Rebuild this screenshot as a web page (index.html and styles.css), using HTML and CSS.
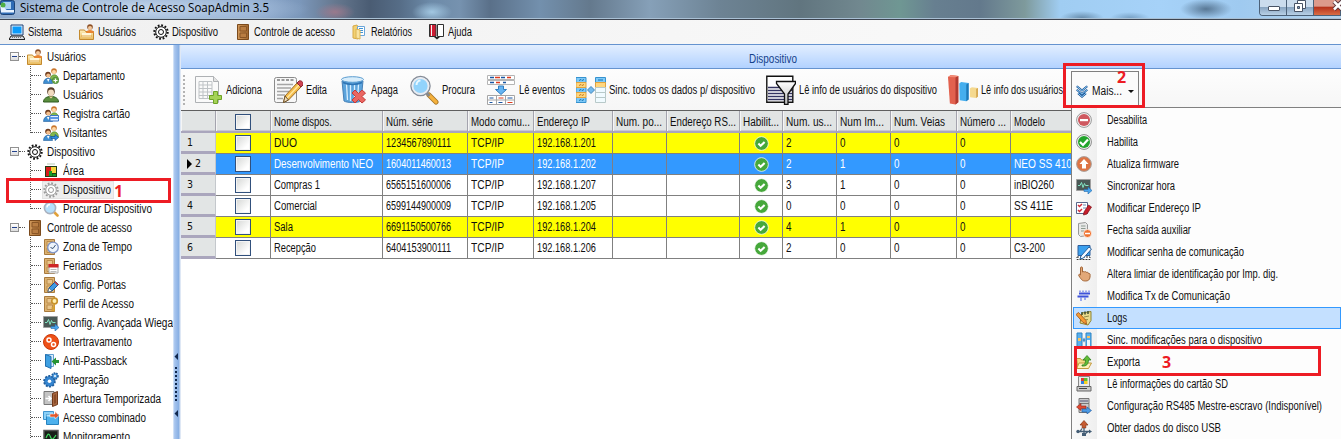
FILE: index.html
```html
<!DOCTYPE html>
<html lang="pt-BR">
<head>
<meta charset="utf-8">
<title>Sistema de Controle de Acesso SoapAdmin 3.5</title>
<link rel="stylesheet" href="styles.css">
</head>
<body>
<svg class="defs" aria-hidden="true">
  <linearGradient id="gBlue" x2="0" y2="1"><stop stop-color="#c9ecff"/><stop offset="1" stop-color="#1683dc"/></linearGradient>
  <linearGradient id="gDoor" x2="1" y2="0"><stop stop-color="#d29a5c"/><stop offset="1" stop-color="#a0662e"/></linearGradient>
  <linearGradient id="gFold" x2="0" y2="1"><stop stop-color="#fff0bd"/><stop offset="1" stop-color="#e8b95c"/></linearGradient>
  <linearGradient id="gGray" x2="0" y2="1"><stop stop-color="#fff"/><stop offset="1" stop-color="#bcbcbc"/></linearGradient>
  <symbol id="pc" viewBox="0 0 16 16"><path d="M2 1h12v10H2z" fill="#e8f4ff" stroke="#1b3f74"/><path d="M3.500 2.500h9v7h-9z" fill="#0c9bfa"/><path d="M2 12h12l2 3.500H0z" fill="#d9dde4" stroke="#222"/><path d="M3 13.500h9" stroke="#777" stroke-dasharray="1 1"/></symbol>
  <symbol id="userfolder" viewBox="0 0 16 16"><path d="M.5 6h5l1 1.500h8v8H.5z" fill="url(#gFold)" stroke="#c48a2e"/><path d="M3 9h9v4H3z" fill="#fff6d8"/><circle cx="11" cy="3" r="2.800" fill="#8c4f25"/><circle cx="11" cy="4" r="2" fill="#f5c99c"/><path d="M7 9c0-4 8-4 8 0z" fill="#e98532"/><path d="M2 12h11" stroke="#e0a848"/></symbol>
  <symbol id="gear" viewBox="0 0 16 16"><circle cx="8" cy="8" r="6.700" fill="none" stroke="currentColor" stroke-width="2" stroke-dasharray="1.800 1.708"/><circle cx="8" cy="8" r="5.300" fill="#fff" stroke="currentColor"/><circle cx="8" cy="8" r="2.500" fill="#fff" stroke="currentColor"/></symbol>
  <symbol id="door" viewBox="0 0 16 16"><path d="M2.500.5h11v15h-11z" fill="url(#gDoor)" stroke="#7b4a1c"/><path d="M5 2.500h6.500v4.500H5zM5 9h6.500v4.500H5z" fill="#b97d42" stroke="#8a5626"/></symbol>
  <symbol id="tandoor" viewBox="0 0 16 16"><path d="M1.500.5h10v15h-10z" fill="#dcb272" stroke="#a87a3d"/><path d="M4 2.500h5.500v4.500H4zM4 9h5.500v4.500H4z" fill="#e9c68d" stroke="#bb8c4b"/></symbol>
  <symbol id="report" viewBox="0 0 16 16"><path d="M1 2l4-1 1 2v12l-5-1z" fill="#f2d072" stroke="#d6a947"/><path d="M5.500 2.500h7v9h-7z" fill="#fff" stroke="#6aa5d8"/><path d="M7 4.500h4M7 6.500h4M7 8.500h4" stroke="#3e93d6"/><path d="M4 5l4 1v9l-4-1z" fill="#f9e3a0" stroke="#dcb453"/></symbol>
  <symbol id="book" viewBox="0 0 16 16"><path d="M.5.500h6.500v12H.5z" fill="#cd1c33" stroke="#303030"/><path d="M8.500.5h6v12h-6z" fill="#fff" stroke="#303030"/><path d="M2.500 1v11" stroke="#f2f2f2"/><path d="M5 13h6l-3 2.500z" fill="#222"/></symbol>
  <symbol id="people" viewBox="0 0 16 16"><circle cx="11" cy="3" r="2.800" fill="#c9752b"/><circle cx="11" cy="4" r="2" fill="#ffd7a5"/><path d="M7 12c0-7 8.500-7 8.500 0z" fill="#82b64c" stroke="#4d812a" stroke-width=".6"/><circle cx="5" cy="6.500" r="2.800" fill="#6e3b1b"/><circle cx="5.200" cy="7.500" r="2" fill="#f4be8a"/><path d="M.5 15.500c0-7 9-7 9 0z" fill="#3e8ed2" stroke="#22609c" stroke-width=".6"/><path d="M4 11l1.200 3L6.500 11z" fill="#fff"/></symbol>
  <symbol id="dept" viewBox="0 0 16 16"><use href="#people"/><circle cx="12.500" cy="12.500" r="3.200" fill="#6cab4a" stroke="#3b7730" stroke-width=".6"/><path d="M12.500 10.500v4M10.500 12.500h4" stroke="#fff" stroke-width="1.200"/></symbol>
  <symbol id="card" viewBox="0 0 16 16"><use href="#people"/><path d="M7 9.500h8.500V15H7z" fill="#e3efff" stroke="#3a75c5"/><path d="M7 11h8.500v2H7z" fill="#5c97e5"/></symbol>
  <symbol id="visit" viewBox="0 0 16 16"><use href="#people"/><path d="M8 11.500h4V9.500l3.600 3-3.600 3v-2H8z" fill="#2f8de2" stroke="#135493" stroke-width=".7"/></symbol>
  <symbol id="user" viewBox="0 0 16 16"><ellipse cx="8" cy="4.500" rx="3.800" ry="4.200" fill="#5a3f2a"/><ellipse cx="8" cy="5.700" rx="3" ry="3.300" fill="#f3dcc0"/><path d="M.5 15c0-3.500 3-5.500 7.500-5.500s7.500 2 7.500 5.500z" fill="#5b8f3e" stroke="#2f5a1e"/><path d="M6 9.500l2 2 2-2z" fill="#fbd3a2"/></symbol>
  <symbol id="area" viewBox="0 0 16 16"><path d="M2 3h12v11H2z" fill="#1f3d15"/><path d="M3 4h5v9H3z" fill="#d91c1c"/><path d="M8 4h5v6H8z" fill="#f6d53a"/><path d="M6 8h3v5H6zM9.500 11h3.500v2H9.500z" fill="#159c29"/><path d="M4 1h8M4 15.500h8" stroke="#b5cbb5"/></symbol>
  <symbol id="lens" viewBox="0 0 16 16"><path d="M11 11l3.500 3.500" stroke="#e1a13a" stroke-width="2.600" stroke-linecap="round"/><circle cx="7" cy="7" r="5.600" fill="#b5dffb" stroke="#a9b1bf" stroke-width="1.600"/><path d="M4 6.500a3 3 0 013-3" fill="none" stroke="#fff" stroke-width="1.300"/></symbol>
  <symbol id="doorclock" viewBox="0 0 16 16"><use href="#tandoor"/><circle cx="10" cy="8.500" r="5.300" fill="#edf4fc" stroke="#7d93c6" stroke-width="1.300"/><path d="M7.500 8.500L10 9.500l2.500-3.500" fill="none" stroke="#3a5478"/></symbol>
  <symbol id="doorcal" viewBox="0 0 16 16"><use href="#tandoor"/><path d="M6 7h9v8H6z" fill="#fff" stroke="#a9a9a9"/><path d="M5.500 6h10v3.500h-10z" fill="#cf2727"/><path d="M7.500 11.500h6M7.500 13.500h6" stroke="#bbb"/></symbol>
  <symbol id="doorpen" viewBox="0 0 16 16"><use href="#tandoor"/><path d="M6 11l6.500-6.500 3 3L9 14l-4 1z" fill="#3f9ae3" stroke="#17579a"/><path d="M5 15l1-4 3 3z" fill="#fff" stroke="#555" stroke-width=".6"/><path d="M11.500 5.500l3 3 1-1-3-3z" fill="#d63b35"/></symbol>
  <symbol id="doorkey" viewBox="0 0 16 16"><use href="#tandoor"/><circle cx="11.500" cy="5" r="2.800" fill="#fff0b0" stroke="#c7912c" stroke-width="1.700"/><path d="M11 8v7M11 12h-2.500M11 14.500H8.500" stroke="#d9a232" stroke-width="1.600"/></symbol>
  <symbol id="scope" viewBox="0 0 16 16"><path d="M.5 1.500h14v11H.5z" fill="#4a5956" stroke="#a0a0a0"/><path d="M2 7.500h2l1.500-3 1.500 5 1.500-4 1 2h3" fill="none" stroke="#83e6c4"/><path d="M8 11.500h4V9l4 3.500-4 3.500v-2.500H8z" fill="#4aa6ee" stroke="#2369ac" stroke-width=".6"/></symbol>
  <symbol id="inter" viewBox="0 0 16 16"><circle cx="8" cy="8" r="7.500" fill="#ee5118" stroke="#cc3909"/><circle cx="6" cy="6" r="2" fill="none" stroke="#fff" stroke-width="1.500"/><circle cx="10.500" cy="10.500" r="2" fill="none" stroke="#fff" stroke-width="1.500"/></symbol>
  <symbol id="anti" viewBox="0 0 16 16"><path d="M2.500 1.500h8v12h-8z" fill="#dceefc" stroke="#5f9fd2"/><path d="M2.500 1.500L8 3.500v12l-5.500-2.500z" fill="#3ea0e2" stroke="#226fae"/><path d="M16 7h-3V4.500L8.500 8.500l4.500 4V10h3z" fill="#279334"/></symbol>
  <symbol id="gears" viewBox="0 0 16 16"><circle cx="6.500" cy="9.300" r="5.300" fill="#2c77c0" stroke="#1f5d9d" stroke-width="2" stroke-dasharray="2 1.300"/><circle cx="6.500" cy="9.300" r="4.500" fill="#3585d0"/><circle cx="6.500" cy="9.300" r="1.800" fill="#fff"/><circle cx="12" cy="4" r="3" fill="#4a97da" stroke="#1f5d9d" stroke-width="1.600" stroke-dasharray="1.500 1"/><circle cx="12" cy="4" r="1" fill="#fff"/></symbol>
  <symbol id="opendoor" viewBox="0 0 16 16"><path d="M1 .5h10v13H1z" fill="#c4c4c4" stroke="#777"/><path d="M2.500 7.500h5M5.500 5l2.500 2.500L5.500 10" fill="none" stroke="#fff" stroke-width="1.600"/><path d="M9.500 2.500l5-2v13l-5 2z" fill="#a76740" stroke="#70391a"/><path d="M11 4l2-1v9l-2 1z" fill="#8a4c28"/></symbol>
  <symbol id="combo" viewBox="0 0 16 16"><path d="M.5 1.500h10v8H.5z" fill="#8bd0f7" stroke="#3f94cf"/><path d="M3.500 4.500h12v10h-12z" fill="#4db1ed" stroke="#2883be"/><path d="M3.500 4.500h12v2h-12z" fill="#b3e2fc"/><path d="M7 4h5V1.500L16 5.500 12 9V7H7z" fill="#e2572a" stroke="#fff" stroke-width=".5"/></symbol>
  <symbol id="monitor" viewBox="0 0 16 16"><path d="M1 1.500h14v12H1z" fill="#171e17" stroke="#555" stroke-width="1.500"/><path d="M3 9c2-5 3-5 4.500-1s3 2 5.500-2" fill="none" stroke="#40d760" stroke-width="1.200"/></symbol>
  <symbol id="add" viewBox="0 0 30 30"><path d="M2.500 1.500h18l5 5v21h-23z" fill="#fafafa" stroke="#aeb1b4"/><path d="M20.500 1.500v5h5" fill="#e3e3e3" stroke="#aeb1b4"/><path d="M6 6.500h13v17H6zM6 10h13M6 13.500h13M6 17h13M6 20.500h13M10 6.500v17M14.500 6.500v17" fill="none" stroke="#bfc3c6"/><path d="M20.500 16.500h4v4h4v4h-4v4h-4v-4h-4v-4h4z" fill="#a4d256" stroke="#6ea326"/></symbol>
  <symbol id="edit" viewBox="0 0 30 30"><rect x="1.500" y="2.500" width="22" height="25" rx="2" fill="#f7f7f7" stroke="#8b8b8b"/><path d="M4 5h17" stroke="#999" stroke-width="2" stroke-dasharray="3 1.500"/><path d="M4 9.500h16M4 13h14M4 16.500h12M4 20h8M4 23.500h6" stroke="#a5a5a5" stroke-width="1.500"/><path d="M12 21L24 8l4 4-12.500 13-5 2.500z" fill="#f4bb48" stroke="#9b6c27"/><path d="M14 23L26 10" stroke="#ffe6a0" stroke-width="1.500"/><path d="M24 8l2-2c2-1 5 1.500 4 4l-2 2z" fill="#ce4452" stroke="#8d2430"/><path d="M12 21l3.500 4-5 2.500z" fill="#efdcb8" stroke="#6d522c"/></symbol>
  <symbol id="trash" viewBox="0 0 30 30"><path d="M4 6l2 20c3 2 14 2 17 0l2-20z" fill="#5da4dc" stroke="#4680b6"/><path d="M8.500 9l1 16M12.500 9v17M16.500 9v17M20.500 9l-1 16" stroke="#d9efff" stroke-width="1.300"/><ellipse cx="14.500" cy="4.500" rx="11" ry="2.800" fill="#d8edfb" stroke="#5a9cd0"/><path d="M5 7.500c5 2.500 14 2.500 19 0" fill="none" stroke="#2f74b4" stroke-width="1.500"/><path d="M17 15l3.500 3.500L24 15l3.500 3-3.500 3.500 3.500 3.500-3.500 3-3.500-3.500L17 28l-3-3 3.500-3.500L14 18z" fill="#ea6661" stroke="#c33b37"/></symbol>
  <symbol id="search" viewBox="0 0 30 30"><path d="M20 20l7 7" stroke="#a57526" stroke-width="5" stroke-linecap="round"/><path d="M20 20l7 7" stroke="#f5b13c" stroke-width="3.200" stroke-linecap="round"/><path d="M16.500 17l4 4" stroke="#888" stroke-width="3"/><circle cx="11.500" cy="11" r="9.500" fill="#c9e9ff" stroke="#868c97" stroke-width="1.500"/><circle cx="11.500" cy="11" r="8" fill="#92d3fb" stroke="#e8ebf1" stroke-width="1.800"/><path d="M7.500 10c0-3 2-4.500 4-4.500" stroke="#e9f8ff" stroke-width="2" fill="none"/></symbol>
  <symbol id="events" viewBox="0 0 30 30"><path d="M1.500.5h27v4h-27zM1.500 5.500h27v4h-27z" fill="#fff" stroke="#b5b5b5"/><path d="M4 2.500h4M15 2.500h4M4 7.500h4M17 7.500h3" stroke="#1957a4" stroke-width="1.300"/><path d="M9 2.500h5M21 2.500h4M10 7.500h4" stroke="#df3b1d" stroke-width="1.300"/><path d="M12.500 11h5v3.500h3L15 19.500 9.500 14.500h3z" fill="#66b4f2" stroke="#2e7ec2"/><path d="M1.500 20.500h27v9h-27zM1.500 25h27M10.500 20.500v9M19.500 20.500v9" fill="#fff" stroke="#a5a5a5"/><path d="M3.500 23h4M21.500 23h5M12.500 27.500h4M3.500 27.500h3" stroke="#1957a4"/><path d="M12.500 23h5M21.500 27.500h5" stroke="#df3b1d"/></symbol>
  <symbol id="sync" viewBox="0 0 30 30"><path d="M0 2.500h10v5H0zM0 12.500h10v5H0zM0 22.500h10v5H0zM19.500 2.500h10v5h-10z" fill="#7fcaf8" stroke="#3692cf"/><path d="M0 7.500h10v5H0zM0 17.500h10v5H0zM19.500 7.500h10v5h-10z" fill="#ffd67e" stroke="#e1a23d"/><path d="M19.500 12.500h10v5h-10zM19.500 17.500h10v5h-10zM19.500 22.500h10v5h-10z" fill="#f1fbff" stroke="#b8c9c9"/><path d="M3 5.500l2-1 1 1 2-1M3 15.500l2-1 1 1 2-1M3 25.500l2-1 1 1 2-1M22 5h5" stroke="#1775b5" fill="none"/><path d="M3 10.500l2-1 1 1 2-1M3 20.500l2-1 1 1 2-1" stroke="#c47f24" fill="none"/><path d="M15 11.500l3.500 3.500-3.500 3.500-3.500-3.500z" fill="#72b9ed" stroke="#4188bd"/></symbol>
  <symbol id="funnel" viewBox="0 0 30 30"><path d="M.8 1.300h26v26h-26z" fill="#fff" stroke="#111" stroke-width="1.400"/><path d="M2 12.500h24M2 15.500h24M2 18.500h24M2 21.500h24M2 24.500h24" stroke="#353562" stroke-width="1.300"/><path d="M10.500 6.500h19v2L22 19v10.500h-3.500V19l-8-10.500z" fill="url(#gGray)" stroke="#111" stroke-width="1.300"/></symbol>
  <symbol id="chart" viewBox="0 0 32 32"><path d="M0 2l3-2 8 1v28l-3 2.500-6-1z" fill="#e2614e"/><path d="M8 2.500l3-1.500v28l-3 2.500z" fill="#b23b31"/><path d="M0 2l3-2 8 1-3 1.500z" fill="#f28b76"/><path d="M12 9l2-1.500 8 1V26l-2.500 2-7-1z" fill="#45aeee"/><path d="M19.500 10l2.500-1.500V26l-2.500 2z" fill="#1d78b8"/><path d="M23.500 14l2-1 6.500.8V23l-2 1.500-6.500-.8z" fill="#f5d98f"/><path d="M30 15l2-1.200V23l-2 1.500z" fill="#d6a952"/></symbol>
  <symbol id="more" viewBox="0 0 16 16"><path d="M2 2.500l6 5 6-5M2 6.500l6 5 6-5M3.500 10.500L8 14.500l4.500-4" fill="none" stroke="#174f92" stroke-width="2.300"/><path d="M2 2.500l6 5 6-5M2 6.500l6 5 6-5M3.500 10.500L8 14.500l4.500-4" fill="none" stroke="#8fd0f8" stroke-width="1.100"/></symbol>
  <symbol id="ok" viewBox="0 0 16 16"><circle cx="8" cy="8" r="7.300" fill="#46a83b" stroke="#fff" stroke-width=".8"/><path d="M4.700 8l2.400 2.500 4.200-4.200" fill="none" stroke="#fff" stroke-width="2.200"/></symbol>
  <symbol id="m0" viewBox="0 0 16 16"><circle cx="8" cy="8" r="7.400" fill="#f4f4f4" stroke="#999"/><circle cx="8" cy="8" r="6" fill="#cf5960"/><path d="M4 7h8v2.200H4z" fill="#fff"/></symbol>
  <symbol id="m1" viewBox="0 0 16 16"><circle cx="8" cy="8" r="7.400" fill="#f4f4f4" stroke="#888"/><circle cx="8" cy="8" r="6" fill="#22a42c"/><path d="M4 8l3 3 5-5.500" fill="none" stroke="#fff" stroke-width="2.200"/></symbol>
  <symbol id="m2" viewBox="0 0 16 16"><circle cx="8" cy="8" r="7.400" fill="#dd7444" stroke="#a9a19e"/><path d="M8 3l4.500 5H10v4.500H6V8H3.500z" fill="#fff"/></symbol>
  <symbol id="m4" viewBox="0 0 16 16"><path d="M.5 2.500h11v11H.5z" fill="#fff" stroke="#59668b"/><path d="M2 5l1.500 1.500L6 4M2 10l1.500 1.500L6 9" fill="none" stroke="#d22b38" stroke-width="1.500"/><path d="M7 5h3M7 8h3" stroke="#6888b5"/><path d="M8 12l4.500-7 3 2-4.500 7-3.500 1z" fill="#c71e2c" stroke="#7d1018" stroke-width=".7"/></symbol>
  <symbol id="m5" viewBox="0 0 16 16"><path d="M2.500 1.500l7-1 2 2v11l-7 1-2-2z" fill="#e8e8e8" stroke="#989898"/><path d="M5 4h4.500M5 6.500h4.500M5 9h4.500" stroke="#8d9b90"/><circle cx="11.500" cy="11.500" r="4" fill="#ef7331" stroke="#fff" stroke-width=".7"/><path d="M9 11.500h5" stroke="#fff" stroke-width="1.500"/></symbol>
  <symbol id="m6" viewBox="0 0 16 16"><path d="M2 1.500h12v10H2z" fill="#3ba0ee" stroke="#305e9a"/><path d="M1 13h13v2.500H1z" fill="#fff" stroke="#333" stroke-dasharray="2 1"/><path d="M5 12l8-9 2.500 2-8 9-3.500 1z" fill="#f5f9ff" stroke="#24609d"/></symbol>
  <symbol id="m7" viewBox="0 0 16 16"><path d="M4.500 8V2c0-1.500 2-1.500 2 0v4c2-1 2 0 2 0 2-1 2 .5 2 .5 2-.7 2 1 2 1 2-.5 1.700 1.500 1.500 3.500-.3 3-2 4-4.500 4C6.500 15 5.500 14 3 10c-1-1.500.5-2.500 1.500-1z" fill="#e2a878" stroke="#a4683a"/></symbol>
  <symbol id="m8" viewBox="0 0 16 16"><path d="M3 5.500h11M1.500 8.500h11" stroke="#3d52da" stroke-width="2"/><path d="M4 4V2.500M7 4V2.500M10 4V2.500M13 4V2.500M5 9v4M9 9v3" stroke="#7d90ec" stroke-width="1.500"/></symbol>
  <symbol id="m9" viewBox="0 0 16 16"><path d="M6 3l9-1.500v9L12 15l-8-2z" fill="#eadc8e" stroke="#8d8330"/><path d="M6 2v3M9 1.500v3M12 1v3" stroke="#3b4d33" stroke-width="1.500"/><path d="M8 7l5-1M8 10l4-.5" stroke="#948d4a"/><path d="M0 4.500l2.500-2 7.500 8 .5 3.500L7 12.500z" fill="#f59b33" stroke="#9d4c14" stroke-width=".8"/></symbol>
  <symbol id="m10" viewBox="0 0 16 16"><path d="M1 1h5v14H1zM10 1h5v14h-5z" fill="#5ab1ef" stroke="#2d83c3"/><path d="M2 6h3v3H2zM11 4h3v2h-3z" fill="#f9c360"/><path d="M11 8h3v6h-3z" fill="#edf9ff"/><path d="M8 5.500l1.500 2.500-1.500 2.500-1.500-2.500z" fill="#4991ce"/></symbol>
  <symbol id="m11" viewBox="0 0 16 16"><path d="M.5 4.500h4l1 1.500h6v8H2z" fill="#f4dc87" stroke="#c3993d"/><path d="M3 9h12.500l-3 5.500H.8z" fill="#fff1b9" stroke="#c3993d"/><path d="M6 11c3 0 3.500-2 3.500-5H7l4-4.500L15 6h-2.500c0 4-2 6.500-6.500 6z" fill="#62bd35" stroke="#308024" stroke-width=".8"/></symbol>
  <symbol id="m12" viewBox="0 0 16 16"><path d="M2.500.5h11v10h-11z" fill="#eaeaea" stroke="#888"/><path d="M5 2h3v3H5z" fill="#e33b2e"/><path d="M8 2h3.500v3H8z" fill="#5abe32"/><path d="M5 5h3v3H5z" fill="#2f7fe3"/><path d="M8 5h3.500v3H8z" fill="#f5cf22"/><path d="M1 10.500h14V15H1z" fill="#cacaca" stroke="#666"/><path d="M3 12.500h8" stroke="#444"/></symbol>
  <symbol id="m13" viewBox="0 0 16 16"><path d="M3 .5h10v5H3zM3 5.500h10v9H3z" fill="#c9cacc" stroke="#777"/><path d="M4 3h8" stroke="#557"/><path d="M.5 9L5 5.500V8h5v2.500H5v2z" fill="#df4931" stroke="#92231a" stroke-width=".6"/><path d="M15.500 12.500L11 9v2H6v3h5v2z" fill="#4c9ae4" stroke="#20599d" stroke-width=".6"/></symbol>
  <symbol id="m14" viewBox="0 0 16 16"><path d="M8 .5l4 4.500H9.800v3H6.200V5H4z" fill="#c65b31" stroke="#873516" stroke-width=".7"/><path d="M1 11.500h13M8 8v7M4 11.500l2-3M9 14l3-2.500" stroke="#445e76" stroke-width="1.300" fill="none"/><circle cx="2" cy="11.500" r="1.700" fill="#445e76"/><path d="M13 9.500l3 2-3 2zM6 13h4v3H6z" fill="#445e76"/></symbol>
</svg>

<header class="titlebar">
  <svg class="app-icon" viewBox="0 0 16 16"><rect x=".5" y=".5" width="14" height="14" rx="2" fill="#2e6bb5" stroke="#1c4376"/><path d="M3 2h8v7H3z" fill="#aad1f1"/><path d="M0 5c4-1 4 5 8 5h6v2.500H1z" fill="#e8f3ff"/><circle cx="3" cy="5" r="2.500" fill="#50af45"/></svg>
  <span class="title" data-w="249">Sistema de Controle de Acesso SoapAdmin 3.5</span>
  <div class="winbtns">
    <span class="wb"><svg viewBox="0 0 27 15"><rect x="8.500" y="6.500" width="11" height="4" rx=".5" fill="#fff" stroke="#485365"/></svg></span>
    <span class="wb"><svg viewBox="0 0 27 15"><path d="M10.500.5h8v8h-8z" fill="#fff" stroke="#485365"/><path d="M7.500 3.500h8v8h-8z" fill="#fff" stroke="#485365"/><path d="M10.500 6.500h2v2h-2z" fill="#7d9bc0" stroke="#485365"/></svg></span>
    <span class="wb close"><svg viewBox="0 0 27 15"><path d="M20 1.500l8 8M28 1.500l-8 8" stroke="#59353b" stroke-width="4.500"/><path d="M20 1.500l8 8M28 1.500l-8 8" stroke="#fff" stroke-width="2.500"/></svg></span>
  </div>
</header>
<nav class="menubar" id="menubar"></nav>
<div class="body">
  <aside class="tree" id="tree"></aside>
  <div class="splitter">
    <svg viewBox="0 0 8 66"><path d="M5 2v7L1.500 5.500zM5 66v-7L1.500 62.500z" fill="#10284e"/><path d="M3 16v36" stroke="#10284e" stroke-width="2" stroke-dasharray="2 2"/></svg>
  </div>
  <main class="main">
    <div class="panel-head"><span data-w="48">Dispositivo</span></div>
    <div class="toolbar" id="toolbar"><i class="grip"></i></div>
    <div class="grid" id="grid"></div>
  </main>
</div>
<div class="dropdown" id="dropdown"></div>
<div class="mark mark1"><b>1</b></div>
<div class="mark mark2"><b>2</b></div>
<div class="mark mark3"><b>3</b></div>
<script src="app.js"></script>
</body>
</html>
```
FILE: styles.css
```css
* { box-sizing: border-box; }
body {
  margin: 0; width: 1341px; height: 439px; overflow: hidden; position: relative;
  display: flex; flex-direction: column; background: #fff; color: #101010;
  font: 12px/14px "Liberation Sans", Arial, sans-serif;
}
.defs { position: absolute; width: 0; height: 0; }
.fit { display: inline-block; white-space: nowrap; flex: none; text-align: left; }
.fit > span { display: inline-block; transform-origin: 0 50%; white-space: nowrap; }
.ic { width: 16px; height: 16px; flex: none; display: block; overflow: visible; }

.titlebar {
  height: 20px; flex: none; display: flex; align-items: flex-start; overflow: hidden;
  border-bottom: 1px solid #3d4450;
  box-shadow: inset 0 -1px #a9c0d4;
  background:
    radial-gradient(ellipse 180px 20px at 130px 9px, rgba(205,222,241,.9), rgba(180,203,230,.6) 60%, transparent),
    radial-gradient(ellipse 20px 9px at 335px 12px, rgba(166,122,140,.8), transparent),
    radial-gradient(ellipse 20px 10px at 432px 12px, rgba(168,206,232,.9), transparent),
    radial-gradient(ellipse 26px 10px at 1206px 9px, rgba(70,98,125,.8), transparent),
    radial-gradient(ellipse 22px 7px at 1082px 18px, rgba(90,125,155,.8), transparent),
    radial-gradient(ellipse 20px 6px at 1130px 18px, rgba(100,140,175,.7), transparent),
    linear-gradient(90deg, #7f9cc2 0, #8fabcf 250px, #7b97ba 300px, #66788f 335px, #4a5c73 370px, #566d87 400px, #6c8aa8 430px, #7692af 460px, #5a7089 490px, #7390ad 540px, #64798d 590px, #86a0b8 650px, #6d8394 720px, #61757f 800px, #71888f 860px, #6f9793 900px, #677f90 935px, #63798c 980px, #7e9a9c 1025px, #a0cdf2 1060px, #a6d2f8 1160px, #9fcaf0 1240px, #b4d3ec 1341px);
}
.app-icon { width: 16px; height: 16px; flex: none; }
.title { margin: 0 0 0 4px; font: 12.500px/16px "Open Sans", "Noto Sans", sans-serif; color: #000; }
.winbtns { margin-left: auto; display: flex; width: 82px; height: 16px; flex: none; border: 1px solid #4c6178; border-top: 0; border-right: 0; border-radius: 0 0 0 4px; overflow: hidden; }
.wb { width: 27px; height: 15px; flex: none; border-right: 1px solid #4c6178; background: linear-gradient(#cbdced 45%, #8aa6c2 50%, #b8d0e6); }
.wb svg { display: block; width: 27px; height: 15px; }
.close { background: linear-gradient(#dc9a8c 40%, #b7341d 50%, #d96d45); }

.menubar { height: 24px; flex: none; display: flex; align-items: center; gap: 17px; padding-left: 9px; background: linear-gradient(90deg, #f0f0f0, #fcfcfc); }
.menubar .item { display: flex; align-items: center; gap: 3px; }

.body { flex: 1; min-height: 0; display: flex; }
.tree { width: 173px; flex: none; border-top: 1px solid #6593cf; padding-top: 2px; overflow: hidden; background: #fff; }
.node { height: 19px; display: flex; align-items: center; white-space: nowrap; }
.root { padding-left: 10px; }
.box { width: 9px; height: 9px; flex: none; border: 1px solid #919191; background: linear-gradient(#fff, #ddd); display: grid; place-items: center; }
.box::after { content: ""; width: 5px; height: 1px; background: #22418c; }
.dash { height: 1px; width: 6px; margin-right: 2px; border-top: 1px dotted #555; flex: none; }
.root .fit { margin-left: 4px; }
.leaf .vline { width: 1px; height: 19px; margin-left: 30px; border-left: 1px dotted #555; align-self: flex-start; flex: none; }
.leaf.last .vline { height: 10px; }
.leaf .dash { width: 10px; }
.leaf .lbl { padding: 0 2px 0 0; height: 16px; display: flex; align-items: center; gap: 4px; }
.leaf.sel .lbl { background: #eee; box-shadow: 0 0 0 1px #e2e2e2; }
.sel .ic { color: #9b9b9b; }
.splitter { width: 8px; flex: none; border-top: 1px solid #6593cf; background: linear-gradient(90deg, #e0ecfb 0, #a8c5ee 20%, #86aee3 75%, #dfe8f5 88%); padding-top: 306px; }
.splitter svg { display: block; width: 8px; height: 66px; }

.main { flex: 1; min-width: 0; display: flex; flex-direction: column; }
.panel-head { height: 25px; flex: none; border: 1px solid #6593cf; border-width: 1px 0; background: linear-gradient(#e2eeff, #b2d2ff); display: flex; align-items: center; padding: 4px 0 0 568px; color: #15428b; }
.toolbar { height: 41px; flex: none; display: flex; align-items: center; gap: 10px; background: linear-gradient(#fdfdfd, #f6f6f6); }
.grip { width: 2px; height: 30px; margin: 0 -3px 0 2px; flex: none; background: repeating-linear-gradient(#b3b3b3 0 2px, transparent 2px 4px); }
.tool { display: flex; align-items: center; height: 32px; flex: none; }
.tool svg { width: 30px; height: 30px; margin: 0 3px 0 1px; flex: none; }
.more { margin-left: -2px; width: 68px; height: 39px; border: 1px solid #808080; border-bottom: 0; display: flex; align-items: center; padding-left: 3px; gap: 3px; flex: none; background: #fbfbfb; align-self: flex-end; }
.more .ic { width: 14px; height: 14px; }
.caret { border: 3px solid transparent; border-top-color: #111; border-bottom: 0; margin-left: 3px; }

.grid { flex: 1; min-height: 0; border-top: 1px solid #5f5f5f; background: #fff; }
.row { display: grid; grid-template-columns: 35px 55px 112px 85px 66px 79px 54px 73px 43px 54px 54px 66px 54px 61px; height: 21px; width: 891px; }
.cell { border-right: 1px solid #808080; border-bottom: 1px solid #808080; padding: 0 0 0 3px; display: flex; align-items: center; overflow: hidden; }
.cell.mid { justify-content: center; padding: 0; }
.cell.rh { background: #e2e5e5; border-right: 1px solid #c4c8cc; border-bottom: 3px solid #aaa6bd; padding: 2px 0 0 6px; font: 11px/12px "DejaVu Sans", sans-serif; gap: 3px; }
.cell.rh .arrow { border: 5px solid transparent; border-left: 5px solid #000; border-right: 0; }
.head { height: 22px; }
.head .cell { background: #e1e4e4; border-bottom: 2px solid #aaa6bd; border-right: 1px solid #a4a4ae; box-shadow: inset 1px 0 #f5f5f5, inset 0 -1px #c9c8d3; padding-top: 1px; }
.row.y .cell:not(.rh) { background: #ff0; }
.row.s .cell:not(.rh) { background: #3399ff; color: #fff; }
.chk { width: 16px; height: 16px; border: 1px solid #31507c; background: linear-gradient(135deg, #d4d6d4, #fff 75%); box-shadow: inset 0 0 0 1px #f4f4f4; }
.cell .ic { width: 15px; height: 15px; }

.dropdown { position: absolute; left: 1071px; top: 107px; width: 270px; height: 332px; border-left: 1px solid #808080; border-top: 1px solid #808080; padding: 1px 0 0 1px; background: linear-gradient(90deg, #fafafa 0, #efefef 25px, #fdfdfd 25px); }
.opt { height: 22px; display: flex; align-items: center; padding-left: 3px; gap: 15px; }
.opt.hot { background: #c4e0ff; outline: 1px solid #3399ff; outline-offset: -1px; }

.mark { position: absolute; border: 3px solid #ed1c24; }
.mark b { position: absolute; color: #ed1c24; font: bold 16px/12px "Open Sans", "Noto Sans", sans-serif; }
.mark1 { left: 6px; top: 178px; width: 165px; height: 25px; }
.mark1 b { left: 105px; top: 4px; }
.mark2 { left: 1063px; top: 63px; width: 82px; height: 45px; }
.mark2 b { left: 51px; top: 5px; }
.mark3 { left: 1074px; top: 346px; width: 247px; height: 30px; }
.mark3 b { left: 85px; top: 7px; }
```
FILE: app.js
```js
const $ = id => document.getElementById(id);
const icon = n => `<svg class="ic"><use href="#${n}"/></svg>`;
const label = (t, w) => `<span data-w="${w}">${t}</span>`;

$('menubar').innerHTML = [
  ['pc', 'Sistema', 34], ['userfolder', 'Usuários', 38], ['gear', 'Dispositivo', 46],
  ['door', 'Controle de acesso', 81], ['report', 'Relatórios', 41], ['book', 'Ajuda', 24]
].map(([i, t, w]) => `<div class="item">${icon(i)}${label(t, w)}</div>`).join('');

const groups = [
  ['userfolder', 'Usuários', 39, [['dept', 'Departamento', 62], ['user', 'Usuários', 40], ['card', 'Registra cartão', 67], ['visit', 'Visitantes', 44]]],
  ['gear', 'Dispositivo', 48, [['area', 'Área', 21], ['gear', 'Dispositivo', 48, 'sel'], ['lens', 'Procurar Dispositivo', 89]]],
  ['door', 'Controle de acesso', 85, [['doorclock', 'Zona de Tempo', 69], ['doorcal', 'Feriados', 39], ['doorpen', 'Config. Portas', 63],
    ['doorkey', 'Perfil de Acesso', 71], ['scope', 'Config. Avançada Wiega', 110], ['inter', 'Intertravamento', 69], ['anti', 'Anti-Passback', 64],
    ['gears', 'Integração', 46], ['opendoor', 'Abertura Temporizada', 98], ['combo', 'Acesso combinado', 83], ['monitor', 'Monitoramento', 67]]]
];
$('tree').innerHTML = groups.map(([i, t, w, kids], g) =>
  `<div class="node root"><i class="box"></i><i class="dash"></i>${icon(i)}${label(t, w)}</div>` +
  kids.map(([ki, kt, kw, sel], n) =>
    `<div class="node leaf ${sel || ''} ${n === kids.length - 1 && g < 2 ? 'last' : ''}"><i class="vline"></i><i class="dash"></i><div class="lbl">${icon(ki)}${label(kt, kw)}</div></div>`
  ).join('')).join('');

$('toolbar').innerHTML += [
  ['add', 'Adiciona', 36], ['edit', 'Edita', 21], ['trash', 'Apaga', 27], ['search', 'Procura', 33], ['events', 'Lê eventos', 46],
  ['sync', 'Sinc. todos os dados p/ dispositivo', 146], ['funnel', 'Lê info de usuários do dispositivo', 138], ['chart', 'Lê info dos usuários', 82]
].map(([i, t, w]) => `<div class="tool">${icon(i)}${label(t, w)}</div>`).join('') +
  `<div class="more">${icon('more')}${label('Mais...', 30)}<i class="caret"></i></div>`;

const head = [['Nome dispos.', 58], ['Núm. série', 47], ['Modo comu...', 59], ['Endereço IP', 53], ['Num. po...', 46], ['Endereço RS...', 66],
  ['Habilit...', 36], ['Num. us...', 46], ['Num Im...', 44], ['Num. Veias', 51], ['Número ...', 46], ['Modelo', 31]];
const rows = [
  ['y', 'DUO', 23, '1234567890111', '201', 2, 0, '', 0], ['s', 'Desenvolvimento NEO', 99, '1604011460013', '202', 2, 1, 'NEO SS 410', 58],
  ['', 'Compras 1', 46, '6565151600006', '207', 3, 1, 'inBIO260', 40], ['', 'Comercial', 43, '6599144900009', '205', 0, 0, 'SS 411E', 39],
  ['y', 'Sala', 19, '6691150500766', '204', 4, 1, '', 0], ['', 'Recepção', 42, '6404153900111', '206', 2, 0, 'C3-200', 31]
];
const cell = (h, c = '') => `<div class="cell ${c}">${h}</div>`;
const check = cell('<i class="chk"></i>', 'mid');
$('grid').innerHTML =
  `<div class="row head">${cell('')}${check}${head.map(h => cell(label(...h))).join('')}</div>` +
  rows.map(([c, name, w, serial, ip, users, fp, model, mw], n) => `<div class="row ${c}">` +
    cell((c === 's' ? '<i class="arrow"></i>' : '') + label(n + 1, 6), 'rh') + check +
    cell(label(name, w)) + cell(label(serial, 65)) + cell(label('TCP/IP', 33)) + cell(label('192.168.1.' + ip, 59)) +
    cell('') + cell('') + cell(icon('ok'), 'mid') +
    [users, fp, 0, 0].map(v => cell(label(v, 5.5))).join('') + cell(model && label(model, mw)) + '</div>').join('');

$('dropdown').innerHTML = [
  ['m0', 'Desabilita', 40], ['m1', 'Habilita', 31], ['m2', 'Atualiza firmware', 72], ['scope', 'Sincronizar hora', 68],
  ['m4', 'Modificar Endereço IP', 94], ['m5', 'Fecha saída auxiliar', 84], ['m6', 'Modificar senha de comunicação', 137],
  ['m7', 'Altera limiar de identificação por Imp. dig.', 171], ['m8', 'Modifica Tx de Comunicação', 123], ['m9', 'Logs', 20],
  ['m10', 'Sinc. modificações para o dispositivo', 155], ['m11', 'Exporta', 33], ['m12', 'Lê informações do cartão SD', 121],
  ['m13', 'Configuração RS485 Mestre-escravo (Indisponível)', 215], ['m14', 'Obter dados do disco USB', 114]
].map(([i, t, w], n) => `<div class="opt ${n === 9 ? 'hot' : ''}">${icon(i)}${label(t, w)}</div>`).join('');

// Condense every label horizontally to its declared width.
document.querySelectorAll('[data-w]').forEach(el => {
  const w = +el.dataset.w;
  const inner = document.createElement('span');
  inner.textContent = el.textContent;
  el.replaceChildren(inner);
  el.classList.add('fit');
  const natural = inner.getBoundingClientRect().width;
  el.style.width = w + 'px';
  inner.style.transform = `scaleX(${w / natural})`;
});
```
